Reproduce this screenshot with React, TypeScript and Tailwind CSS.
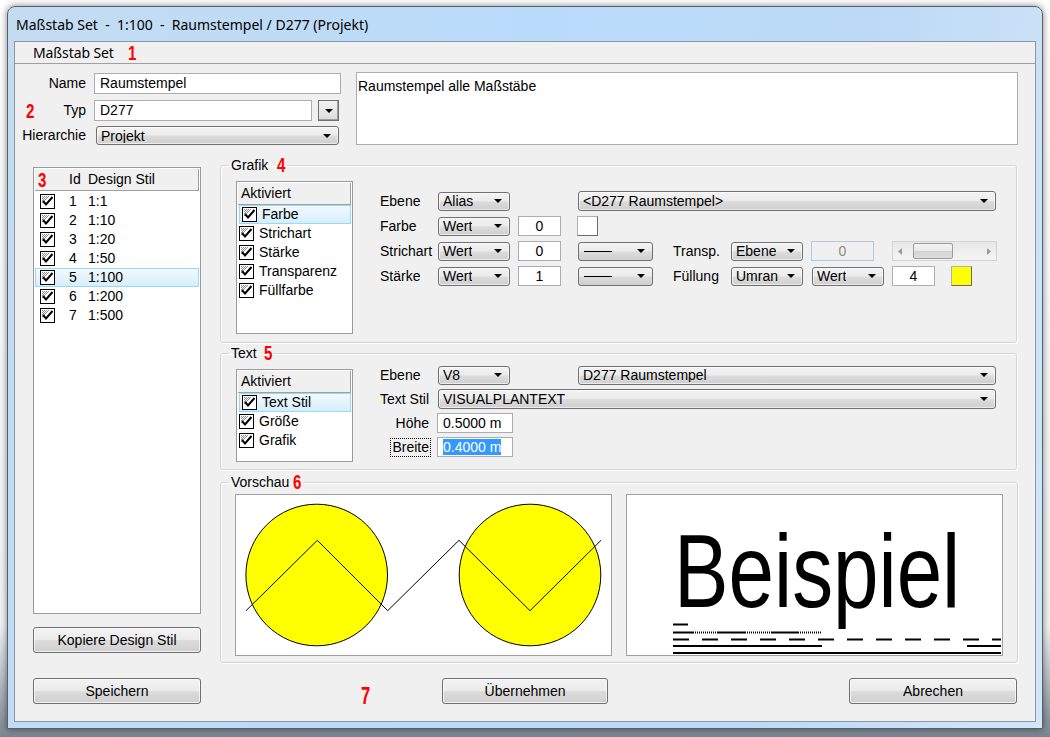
import React from "react";

const dots: [number, number][] = [];
for (let y = 2; y <= 12; y++) {
  for (let x = 2; x <= 12; x++) {
    if (x + y <= 11 && (x + y) % 2 === 0) dots.push([x, y]);
  }
}

function CheckBox() {
  return (
    <svg width="15" height="15" viewBox="0 0 15 15" className="shrink-0">
      <rect x="0.5" y="0.5" width="14" height="14" fill="#fff" stroke="#000" />
      <g fill="#8c8c8c">
        {dots.map(([x, y]) => (
          <rect key={`${x}-${y}`} x={x} y={y} width="1" height="1" />
        ))}
      </g>
      <path d="M3 7 L6 10.5 L12.5 3" fill="none" stroke="#000" strokeWidth="2" />
    </svg>
  );
}

function Arrow() {
  return (
    <svg width="8" height="4" viewBox="0 0 8 4" className="shrink-0">
      <path d="M0 0H8L4 4Z" fill="#000" />
    </svg>
  );
}

function Red({ children, className = "" }: { children: React.ReactNode; className?: string }) {
  return (
    <span
      className={`inline-block origin-left scale-x-[0.72] font-['Liberation_Sans',Arial,sans-serif] text-[21px] font-bold leading-[16px] text-[#ff0000] ${className}`}
    >
      {children}
    </span>
  );
}

function Combo({ children, className = "" }: { children?: React.ReactNode; className?: string }) {
  return (
    <div
      className={`flex shrink-0 items-center justify-between rounded-[3px] border border-[#707070] bg-[linear-gradient(#f3f3f3_0%,#ebebeb_48%,#dcdcdc_52%,#cfcfcf_100%)] pl-[4px] pr-[7px] shadow-[inset_0_0_0_1px_rgba(255,255,255,0.6)] ${className}`}
    >
      <span className="truncate leading-none">{children}</span>
      <Arrow />
    </div>
  );
}

function LineCombo({ className = "" }: { className?: string }) {
  return (
    <div
      className={`flex shrink-0 items-center justify-between rounded-[3px] border border-[#707070] bg-[linear-gradient(#f3f3f3_0%,#ebebeb_48%,#dcdcdc_52%,#cfcfcf_100%)] pl-[5px] pr-[7px] ${className}`}
    >
      <div className="h-[1px] w-[28px] bg-black" />
      <Arrow />
    </div>
  );
}

function Input({ children, className = "" }: { children?: React.ReactNode; className?: string }) {
  return (
    <div className={`flex shrink-0 items-center border border-[#abadb3] bg-white ${className}`}>
      {children}
    </div>
  );
}

function Button({ children, className = "" }: { children: React.ReactNode; className?: string }) {
  return (
    <div
      className={`flex shrink-0 items-center justify-center rounded-[3px] border border-[#707070] bg-[linear-gradient(#f3f3f3_0%,#ebebeb_48%,#dcdcdc_52%,#cfcfcf_100%)] shadow-[inset_0_0_0_1px_rgba(255,255,255,0.7)] ${className}`}
    >
      {children}
    </div>
  );
}

function CheckList({
  items,
  selected,
  className = "",
}: {
  items: string[];
  selected: number;
  className?: string;
}) {
  return (
    <div className={`shrink-0 border border-[#9a9a9a] bg-white ${className}`}>
      <div className="mx-[1px] mt-[1px] flex h-[22px] items-center border-b border-r border-[#a0a0a0] bg-[#f0f0f0] pl-[3px]">
        Aktiviert
      </div>
      {items.map((it, i) => (
        <div
          key={it}
          className={`flex h-[19px] items-center pl-[2px] ${
            i === selected
              ? "ml-[2px] mr-[1px] border border-[#96d9f9] bg-[linear-gradient(#f2f9fe,#d6eefb)] pl-[0px]"
              : ""
          }`}
        >
          <CheckBox />
          <span className="ml-[5px]">{it}</span>
        </div>
      ))}
    </div>
  );
}

const Label = ({ children, className = "" }: { children: React.ReactNode; className?: string }) => (
  <span className={`shrink-0 ${className}`}>{children}</span>
);

const fieldsetCls =
  "shrink-0 rounded-[3px] border border-[#d5d5d5] shadow-[inset_1px_1px_0_#ffffff,1px_1px_0_#ffffff]";

export default function App() {
  const scales = ["1:1", "1:10", "1:20", "1:50", "1:100", "1:200", "1:500"];
  return (
    <div className="h-[737px] w-[1050px] overflow-hidden bg-[linear-gradient(#ffffff_0%,#f1f3f5_85%,#7b8590_100%)] font-['Liberation_Sans',Arial,sans-serif] text-[14px] text-black">
      <div className="ml-[7px] mt-[6px] flex h-[723px] w-[1036px] flex-col rounded-t-[8px] border border-[#56616e] bg-[linear-gradient(100deg,#c4dcf2_0%,#b9dbfb_45%,#bcdaf7_75%,#d4e6f7_100%)] shadow-[0_0_7px_rgba(0,0,0,0.5)]">
        {/* title bar */}
        <div className="flex h-[34px] shrink-0 items-center whitespace-pre pl-[8px] font-['Noto_Sans',sans-serif] text-[14px]">
          Maßstab Set  -  1:100  -  Raumstempel / D277 (Projekt)
        </div>

        {/* client */}
        <div className="mx-[6px] flex h-[681px] shrink-0 flex-col border border-[#8a97a6] bg-[#f0f0f0]">
          {/* menu bar */}
          <div className="flex h-[22px] shrink-0 items-center border-b border-[#a0a0a0] pl-[18px] font-['Noto_Sans',sans-serif] text-[14px] tracking-[-0.1px]">
            <span>Maßstab Set</span>
            <Red className="ml-[14px] mt-[1px]">1</Red>
          </div>

          {/* form */}
          <div className="flex pt-[9px]">
            <div className="flex w-[326px] shrink-0 flex-col">
              <div className="flex h-[21px] items-center">
                <Label className="w-[71px] text-right">Name</Label>
                <Input className="ml-[8px] h-[21px] w-[247px] pl-[5px]">Raumstempel</Input>
              </div>
              <div className="mt-[6px] flex h-[21px] items-center">
                <div className="flex w-[71px] items-center justify-between pl-[11px]">
                  <Red>2</Red>
                  <span>Typ</span>
                </div>
                <Input className="ml-[8px] h-[21px] w-[218px] pl-[5px]">D277</Input>
                <div className="ml-[6px] flex h-[21px] w-[21px] items-center justify-center border border-[#707070] bg-[linear-gradient(#f3f3f3,#dcdcdc)] shadow-[inset_-1px_-1px_0_#a0a0a0]">
                  <Arrow />
                </div>
              </div>
              <div className="mt-[5px] flex h-[19px] items-center">
                <Label className="w-[71px] text-right">Hierarchie</Label>
                <Combo className="ml-[10px] h-[19px] w-[243px]">Projekt</Combo>
              </div>
            </div>
            <div className="-mt-[1px] ml-[15px] h-[73px] w-[662px] shrink-0 border border-[#abadb3] bg-white pl-[1px] pt-[3px]">
              Raumstempel alle Maßstäbe
            </div>
          </div>

          {/* main */}
          <div className="flex">
            {/* left column */}
            <div className="ml-[18px] mt-[22px] flex w-[168px] shrink-0 flex-col">
              <div className="h-[447px] border border-[#9a9a9a] bg-white">
                <div className="mx-[1px] mt-[1px] flex h-[22px] items-center border-b border-r border-[#a0a0a0] bg-[#f0f0f0] pl-[3px]">
                  <Red className="w-[31px]">3</Red>
                  <span className="w-[19px]">Id</span>
                  <span>Design Stil</span>
                </div>
                <div className="pt-[1px]">
                  {scales.map((s, i) => (
                    <div
                      key={s}
                      className={`flex h-[19px] items-center ${
                        i === 4
                          ? "mx-[1px] border border-[#96d9f9] bg-[linear-gradient(#f2f9fe,#d6eefb)] pl-[4px]"
                          : "pl-[6px]"
                      }`}
                    >
                      <CheckBox />
                      <span className="ml-[14px] w-[19px]">{i + 1}</span>
                      <span>{s}</span>
                    </div>
                  ))}
                </div>
              </div>
              <Button className="mt-[13px] h-[26px] w-[168px]">Kopiere Design Stil</Button>
            </div>

            {/* right column */}
            <div className="ml-[19px] mt-[12px] flex w-[797px] shrink-0 flex-col">
              {/* Grafik */}
              <fieldset className={`h-[186px] px-[15px] pt-[8px] ${fieldsetCls}`}>
                <legend className="-ml-[7px] flex h-[16px] items-center px-[2px] leading-[16px]">
                  <span>Grafik</span>
                  <Red className="ml-[9px] -mr-[4px]">4</Red>
                </legend>
                <div className="flex">
                  <CheckList
                    className="h-[153px] w-[117px]"
                    items={["Farbe", "Strichart", "Stärke", "Transparenz", "Füllfarbe"]}
                    selected={0}
                  />
                  <div className="ml-[27px] mt-[10px] flex flex-col gap-[5px]">
                    <div className="flex h-[20px] items-center">
                      <Label className="w-[58px]">Ebene</Label>
                      <Combo className="h-[19px] w-[72px]">Alias</Combo>
                      <Combo className="ml-[68px] h-[20px] w-[418px] pl-[2px]">&lt;D277 Raumstempel&gt;</Combo>
                    </div>
                    <div className="flex h-[20px] items-center">
                      <Label className="w-[58px]">Farbe</Label>
                      <Combo className="h-[19px] w-[72px]">Wert</Combo>
                      <Input className="ml-[8px] h-[20px] w-[43px] justify-center">0</Input>
                      <div className="ml-[16px] h-[20px] w-[21px] border border-[#b0b0b0] border-b-[#6a6a6a] border-r-[#6a6a6a] bg-white" />
                    </div>
                    <div className="flex h-[20px] items-center">
                      <Label className="w-[58px]">Strichart</Label>
                      <Combo className="h-[19px] w-[72px]">Wert</Combo>
                      <Input className="ml-[8px] h-[20px] w-[43px] justify-center">0</Input>
                      <LineCombo className="ml-[17px] h-[19px] w-[75px]" />
                      <Label className="ml-[20px] w-[58px]">Transp.</Label>
                      <Combo className="h-[19px] w-[72px]">Ebene</Combo>
                      <div className="ml-[8px] flex h-[20px] w-[63px] shrink-0 items-center justify-center border border-[#b5c8dc] bg-[#f0f0f0] text-[#8a8a8a]">
                        0
                      </div>
                      <div className="ml-[18px] flex h-[20px] w-[105px] shrink-0 items-center border border-[#d2d2d2] bg-[linear-gradient(#e8e8e8,#f4f4f4)] px-[5px]">
                        <svg width="4" height="7" viewBox="0 0 4 7" className="shrink-0">
                          <path d="M4 0V7L0 3.5Z" fill="#9a9a9a" />
                        </svg>
                        <div className="ml-[11px] h-[16px] w-[40px] rounded-[2px] border border-[#9b9b9b] bg-[linear-gradient(#f4f4f4_0%,#e8e8e8_50%,#d4d4d4_51%,#dedede_100%)]" />
                        <div className="flex-1" />
                        <svg width="4" height="7" viewBox="0 0 4 7" className="shrink-0">
                          <path d="M0 0V7L4 3.5Z" fill="#9a9a9a" />
                        </svg>
                      </div>
                    </div>
                    <div className="flex h-[20px] items-center">
                      <Label className="w-[58px]">Stärke</Label>
                      <Combo className="h-[19px] w-[72px]">Wert</Combo>
                      <Input className="ml-[8px] h-[20px] w-[43px] justify-center">1</Input>
                      <LineCombo className="ml-[17px] h-[19px] w-[75px]" />
                      <Label className="ml-[20px] w-[58px]">Füllung</Label>
                      <Combo className="h-[19px] w-[72px]">Umran</Combo>
                      <Combo className="ml-[9px] h-[19px] w-[72px]">Wert</Combo>
                      <Input className="ml-[8px] h-[20px] w-[43px] justify-center">4</Input>
                      <div className="ml-[16px] h-[20px] w-[21px] border border-[#b0b0b0] border-b-[#6a6a6a] border-r-[#6a6a6a] bg-[#ffff00]" />
                    </div>
                  </div>
                </div>
              </fieldset>

              {/* Text */}
              <fieldset className={`mt-[2px] h-[125px] px-[15px] pt-[8px] ${fieldsetCls}`}>
                <legend className="-ml-[7px] flex h-[16px] items-center px-[2px] leading-[16px]">
                  <span>Text</span>
                  <Red className="ml-[7px] -mr-[4px]">5</Red>
                </legend>
                <div className="flex">
                  <CheckList className="h-[93px] w-[117px]" items={["Text Stil", "Größe", "Grafik"]} selected={0} />
                  <div className="-mt-[4px] ml-[27px] flex flex-col gap-[4px]">
                    <div className="flex h-[20px] items-center">
                      <Label className="w-[58px]">Ebene</Label>
                      <Combo className="h-[19px] w-[72px]">V8</Combo>
                      <Combo className="ml-[68px] h-[19px] w-[418px] pl-[2px]">D277 Raumstempel</Combo>
                    </div>
                    <div className="flex h-[20px] items-center">
                      <Label className="w-[58px]">Text Stil</Label>
                      <Combo className="h-[20px] w-[558px] pl-[2px]">VISUALPLANTEXT</Combo>
                    </div>
                    <div className="flex h-[20px] items-center">
                      <Label className="w-[51px] pr-[2px] text-right">Höhe</Label>
                      <Input className="ml-[6px] h-[20px] w-[76px] pl-[5px]">0.5000 m</Input>
                    </div>
                    <div className="flex h-[20px] items-center">
                      <div className="flex w-[51px] shrink-0 justify-end">
                        <span className="border border-dotted border-black px-[1px] leading-[17px]">Breite</span>
                      </div>
                      <Input className="ml-[6px] h-[20px] w-[76px] pl-[5px]">
                        <span className="bg-[#3399ff] leading-[16px] text-white">0.4000 m</span>
                      </Input>
                    </div>
                  </div>
                </div>
              </fieldset>

              {/* Vorschau */}
              <fieldset className={`mt-[4px] h-[189px] px-[14px] pt-[4px] ${fieldsetCls}`}>
                <legend className="-ml-[6px] flex h-[16px] items-center px-[2px] leading-[16px]">
                  <span>Vorschau</span>
                  <Red className="ml-[4px] -mr-[4px]">6</Red>
                </legend>
                <div className="flex gap-[14px]">
                  <div className="h-[162px] w-[377px] border border-[#a0a0a0] bg-white">
                    <svg width="375" height="160" viewBox="0 0 375 160">
                      <circle cx="80.7" cy="80" r="70.8" fill="#ffff00" stroke="#000" strokeWidth="1" />
                      <circle cx="294" cy="80" r="70.8" fill="#ffff00" stroke="#000" strokeWidth="1" />
                      <polyline
                        points="10,115.7 81.3,45.3 151.7,115.7 223,45.3 294,115.7 365,45.3"
                        fill="none"
                        stroke="#000"
                        strokeWidth="1"
                      />
                    </svg>
                  </div>
                  <div className="flex h-[162px] w-[377px] flex-col border border-[#a0a0a0] bg-white">
                    <div className="h-[104px] shrink-0 pt-[0px] mt-[24px]">
                      <span className="ml-[47px] inline-block origin-left scale-x-[0.786] whitespace-nowrap text-[104px] leading-[104px]">
                        Beispiel
                      </span>
                    </div>
                    <svg width="375" height="32" viewBox="0 0 375 32" className="shrink-0">
                      <g stroke="#000">
                        <line x1="46" y1="1.5" x2="61" y2="1.5" strokeWidth="2" />
                        <line x1="46" y1="9.5" x2="66" y2="9.5" strokeWidth="2" />
                        <line x1="66" y1="9.5" x2="90" y2="9.5" strokeWidth="2" strokeDasharray="1 1" />
                        <line x1="90" y1="9.5" x2="118" y2="9.5" strokeWidth="2" />
                        <line x1="118" y1="9.5" x2="144" y2="9.5" strokeWidth="2" strokeDasharray="1 1" />
                        <line x1="144" y1="9.5" x2="171" y2="9.5" strokeWidth="2" />
                        <line x1="171" y1="9.5" x2="195" y2="9.5" strokeWidth="2" strokeDasharray="1 1" />
                        <line x1="46" y1="16.5" x2="374" y2="16.5" strokeWidth="2" strokeDasharray="16 13" />
                        <line x1="46" y1="23" x2="195" y2="23" strokeWidth="2" />
                        <line x1="340" y1="23" x2="374" y2="23" strokeWidth="2" />
                        <line x1="46" y1="30" x2="374" y2="30" strokeWidth="2" />
                      </g>
                    </svg>
                  </div>
                </div>
              </fieldset>
            </div>
          </div>

          {/* bottom buttons */}
          <div className="relative mt-[15px] flex justify-between px-[18px]">
            <Button className="h-[26px] w-[168px]">Speichern</Button>
            <Button className="h-[26px] w-[166px]">Übernehmen</Button>
            <Button className="h-[26px] w-[168px]">Abrechen</Button>
            <Red className="absolute left-[346px] top-[10px] text-[23px]">7</Red>
          </div>
        </div>
      </div>
    </div>
  );
}
